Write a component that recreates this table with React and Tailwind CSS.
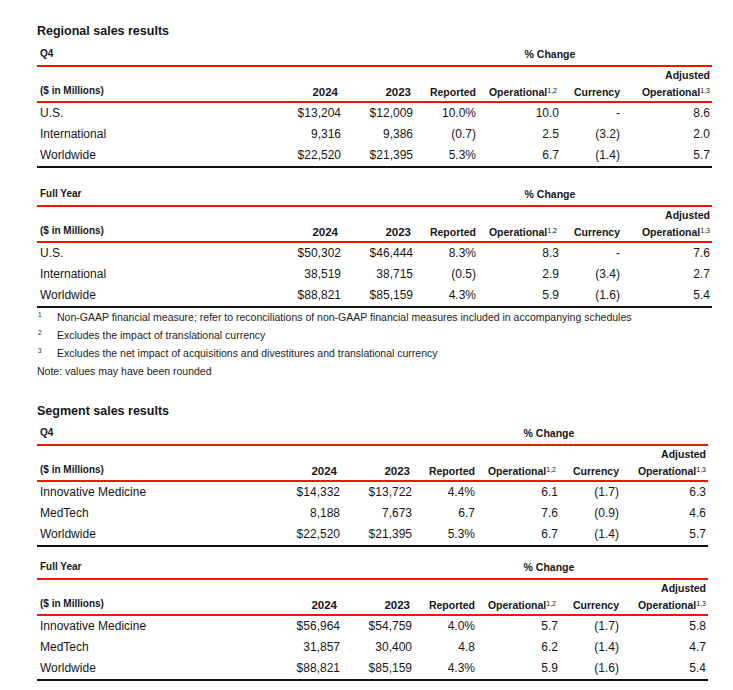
const regionalQ4 = [
  ['U.S.', '$13,204', '$12,009', '10.0%', '10.0', '-', '8.6'],
  ['International', '9,316', '9,386', '(0.7)', '2.5', '(3.2)', '2.0'],
  ['Worldwide', '$22,520', '$21,395', '5.3%', '6.7', '(1.4)', '5.7'],
];

const regionalFY = [
  ['U.S.', '$50,302', '$46,444', '8.3%', '8.3', '-', '7.6'],
  ['International', '38,519', '38,715', '(0.5)', '2.9', '(3.4)', '2.7'],
  ['Worldwide', '$88,821', '$85,159', '4.3%', '5.9', '(1.6)', '5.4'],
];

const segmentQ4 = [
  ['Innovative Medicine', '$14,332', '$13,722', '4.4%', '6.1', '(1.7)', '6.3'],
  ['MedTech', '8,188', '7,673', '6.7', '7.6', '(0.9)', '4.6'],
  ['Worldwide', '$22,520', '$21,395', '5.3%', '6.7', '(1.4)', '5.7'],
];

const segmentFY = [
  ['Innovative Medicine', '$56,964', '$54,759', '4.0%', '5.7', '(1.7)', '5.8'],
  ['MedTech', '31,857', '30,400', '4.8', '6.2', '(1.4)', '4.7'],
  ['Worldwide', '$88,821', '$85,159', '4.3%', '5.9', '(1.6)', '5.4'],
];

function SalesTable({ period, rows, narrow, className = '' }) {
  // same columns for every table, the segment ones are a few px narrower on the right
  const cols = narrow
    ? 'grid grid-cols-[1fr_80px_72px_63px_83px_63px_85px] pr-[2px]'
    : 'grid grid-cols-[1fr_80px_72px_63px_83px_63px_88px] pr-[2px]';

  return (
    <div className={className}>
      <div className={cols + ' h-[14px] items-center mb-[4px]'}>
        <div className="pl-[3px] text-[10px] font-bold leading-[14px]">{period}</div>
        <div />
        <div />
        <div />
        <div className="col-span-2 text-center pl-[2px] text-[10.5px] font-bold leading-[14px]">% Change</div>
        <div />
      </div>
      <div className="h-[2px] bg-[#eb1700]" />

      {/* header */}
      <div className={cols + ' h-[34px] items-end font-bold'}>
        <div className="pl-[3px] pb-[3px] text-[10px] leading-[14px]">($ in Millions)</div>
        <div className="text-right pb-[2px] pr-[3px] text-[11.5px] leading-[14px]">2024</div>
        <div className="text-right pb-[2px] pr-[2px] text-[11.5px] leading-[14px]">2023</div>
        <div className="text-right pb-[2px] text-[10.5px] leading-[14px]">Reported</div>
        <div className="text-right pb-[2px] pr-[2px] text-[10.5px] leading-[14px] whitespace-nowrap">
          Operational<sup className="text-[7px] font-normal">1,2</sup>
        </div>
        <div className="text-right pb-[2px] pr-[2px] text-[10.5px] leading-[14px]">Currency</div>
        <div className="text-right text-[10.5px] leading-[17px] whitespace-nowrap">
          <div>Adjusted</div>
          <div>
            Operational<sup className="text-[7px] font-normal">1,3</sup>
          </div>
        </div>
      </div>
      <div className="h-[2px] bg-[#eb1700]" />

      {rows.map((r) => (
        <div key={r[0]} className={cols + ' h-[21px] items-center text-[12px] leading-[21px]'}>
          <div className="pl-[3px]">{r[0]}</div>
          {r.slice(1).map((v, i) => (
            <div key={i} className={i === 4 ? 'text-right pr-[2px]' : 'text-right'}>
              {v}
            </div>
          ))}
        </div>
      ))}
      <div className="h-[2px] bg-[#111]" />
    </div>
  );
}

function Footnote({ n, children }) {
  return (
    <div className="flex leading-[18px]">
      <span className="w-[20px] pl-[1px] text-[6.5px] leading-[14px]">{n}</span>
      <span>{children}</span>
    </div>
  );
}

export default function App() {
  return (
    <div
      className="min-h-screen bg-white text-[#161616] pl-[37px] pt-[23px] pb-[8px]"
      style={{ fontFamily: '"Liberation Sans", Arial, sans-serif' }}
    >
      <div className="w-[675px]">
        <h2 className="text-[12.5px] font-bold leading-[16px] mb-[8px]">Regional sales results</h2>
        <SalesTable period="Q4" rows={regionalQ4} />
        <SalesTable period="Full Year" rows={regionalFY} className="mt-[19px]" />

        <div className="text-[10.5px] text-[#222]">
          <Footnote n="1">
            Non-GAAP financial measure; refer to reconciliations of non-GAAP financial measures included in accompanying schedules
          </Footnote>
          <Footnote n="2">Excludes the impact of translational currency</Footnote>
          <Footnote n="3">Excludes the net impact of acquisitions and divestitures and translational currency</Footnote>
          <div className="leading-[18px]">Note: values may have been rounded</div>
        </div>
      </div>

      <div className="w-[671px] mt-[23px]">
        <h2 className="text-[12.5px] font-bold leading-[16px] mb-[7px]">Segment sales results</h2>
        <SalesTable period="Q4" rows={segmentQ4} narrow />
        <SalesTable period="Full Year" rows={segmentFY} narrow className="mt-[13px]" />
      </div>
    </div>
  );
}
